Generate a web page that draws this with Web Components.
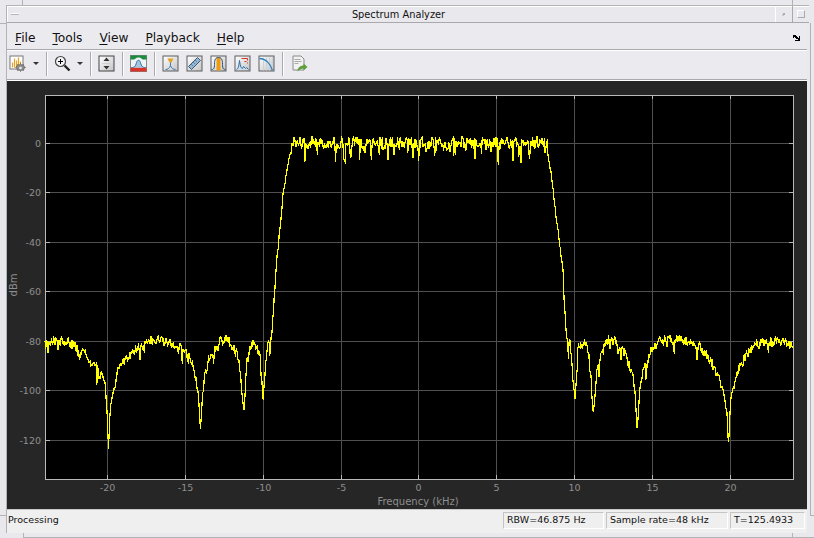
<!DOCTYPE html>
<html>
<head>
<meta charset="utf-8">
<title>Spectrum Analyzer</title>
<style>
html, body { margin: 0; padding: 0; background: #e9e8ec; }
body { font-family: "DejaVu Sans", sans-serif; width: 814px; height: 538px; overflow: hidden; }
</style>
</head>
<body>
<wm-window heading="Spectrum Analyzer">
    <app-menubar>
	<menu-entry key="F" rest="ile"></menu-entry>
	<menu-entry key="T" rest="ools"></menu-entry>
	<menu-entry key="V" rest="iew"></menu-entry>
	<menu-entry key="P" rest="layback"></menu-entry>
	<menu-entry key="H" rest="elp"></menu-entry>
    </app-menubar>
    <app-toolbar></app-toolbar>
    <spectrum-plot></spectrum-plot>
    <app-statusbar>
	<span slot="message">Processing</span>
	<status-cell width="101">RBW=46.875 Hz</status-cell>
	<status-cell width="122">Sample rate=48 kHz</status-cell>
	<status-cell width="75">T=125.4933</status-cell>
    </app-statusbar>
</wm-window>

<script>
// Window manager frame: title bar + client area
class WmWindow extends HTMLElement {
    constructor () {
	super();
	this.attachShadow({ mode: "open" });
	this.shadowRoot.innerHTML = `
<style>
:host { display: block; position: relative; width: 814px; height: 538px; box-sizing: border-box; padding: 5px 5px 5px 6px; }
.frame { display: flex; flex-direction: column; height: 100%; border-top: 1px solid #b3b3b5; border-left: 1px solid #b3b3b5; box-shadow: inset 1px 1px 0 #fff; box-sizing: border-box; }
.title { height: 16px; display: grid; grid-template-columns: 15px 1fr 17px 17px; border-bottom: 1px solid #a9a9ab; flex: none; font-size: 9.8px; color: #111; }
.title > div { display: flex; align-items: center; justify-content: center; }
.btn-min::before { content: ""; width: 8px; height: 1px; background: #b5b5b7; box-shadow: 0 -1px 0 #fff; }
.btn-menu { border-left: 1px solid #fff; }
.btn-menu::before { content: ""; width: 2px; height: 2px; background: #aaa; box-shadow: -1px 1px 0 #ccc; }
.btn-max { border-left: 1px solid #a9a9ab; }
.btn-max::before { content: ""; width: 6px; height: 6px; border: 1px solid #fff; border-right-color: #aaa; border-bottom-color: #aaa; }
.client { flex: 1; display: flex; flex-direction: column; min-height: 0; margin-right: 2px; }
.edge { position: absolute; background: #b3b3b5; }
.e1 { left: 22px; top: 0; width: 1px; height: 5px; }
.e2 { left: 0; top: 23px; width: 7px; height: 1px; }
.e3 { left: 0; top: 515px; width: 6px; height: 1px; }
.e4 { left: 23px; top: 533px; width: 1px; height: 5px; }
.e5 { left: 792px; top: 0; width: 1px; height: 6px; }
.e6 { left: 810px; top: 515px; width: 4px; height: 1px; }
.e7 { left: 23px; top: 537px; width: 791px; height: 1px; }
.e8 { left: 810px; top: 23px; width: 1px; height: 492px; }
.e9 { left: 792px; top: 533px; width: 1px; height: 5px; }
</style>
<div class="frame">
    <div class="title">
	<div class="btn-min"></div>
	<div>${this.getAttribute("heading")}</div>
	<div class="btn-menu"></div>
	<div class="btn-max"></div>
    </div>
    <div class="client"><slot></slot></div>
</div>
<i class="edge e1"></i><i class="edge e2"></i><i class="edge e3"></i><i class="edge e4"></i>
<i class="edge e5"></i><i class="edge e6"></i><i class="edge e7"></i><i class="edge e8"></i><i class="edge e9"></i>
`;
    }
}
customElements.define("wm-window", WmWindow);


class AppMenubar extends HTMLElement {
    constructor () {
	super();
	this.attachShadow({ mode: "open" });
	this.shadowRoot.innerHTML = `
<style>
:host { display: flex; flex: none; align-items: center; gap: 17px; height: 27px; box-sizing: border-box; padding: 3px 0 0 8px; position: relative; background: #ebeaee; border-bottom: 1px solid #a9a9ab; font-size: 12.2px; color: #111; }
svg { position: absolute; right: 6px; top: 12px; }
</style>
<slot></slot>
<svg width="8" height="6" viewBox="0 0 8 6" shape-rendering="crispEdges"><path d="M0 0h3v1h1v1h1v1h1V1h1v5H2V5h3V4H3V3H2V2H1v1H0z" fill="#000"/></svg>
`;
    }
}
customElements.define("app-menubar", AppMenubar);

class MenuEntry extends HTMLElement {
    constructor () {
	super();
	this.attachShadow({ mode: "open" });
	this.shadowRoot.innerHTML = `
<style>
:host { display: inline-block; }
u { text-underline-offset: 2px; }
</style>
<u>${this.getAttribute("key")}</u>${this.getAttribute("rest")}
`;
    }
}
customElements.define("menu-entry", MenuEntry);


// 17x17 toolbar glyphs
const TOOL_FRAME = `<rect x="1.5" y="1.5" width="15" height="15" fill="url(#g)" stroke="#5c5c5c"/>`;
const TOOL_ICONS = {
    "settings": `<rect x="1.5" y="1.5" width="13" height="13" fill="#fff" stroke="#777"/>
	<path d="M4 13V8M6 13V4M8 13V6M10 13V3M12 13V7" stroke="#e8a020" stroke-width="1.2"/>
	<path d="M12 9l1 1.500 2-.500 .5 2 1.500 1-1.500 1-.5 2-2-.500-1 1.500-1-1.500-2 .500-.5-2-1.500-1 1.500-1 .5-2 2 .500z" fill="#8c8c8c" stroke="#555" stroke-width=".6"/><circle cx="12" cy="13.500" r="1.300" fill="#eee"/>`,
    "zoom": `<circle cx="7" cy="7" r="5" fill="#f4f4f4" stroke="#444" stroke-width="1.2"/>
	<path d="M4.500 7h5M7 4.500v5" stroke="#000"/><path d="M11 11l5 5" stroke="#222" stroke-width="2.4"/>`,
    "scale": `<rect x="1.5" y="1.5" width="15" height="15" fill="url(#g)" stroke="#444"/>
	<path d="M9 3l3 3.500H6zM9 15l3-3.500H6z" fill="#333"/><path d="M5 9h8" stroke="#bbb" stroke-dasharray="1 1"/>`,
    "spectrum": `<rect x="1" y="1" width="16" height="16" fill="#eef3f4" stroke="#888"/>
	<path d="M1 5h3c2 0 2-2 5-2s3 2 5 2h3V1H1z" fill="#1d8a3e"/><rect x="1" y="13" width="16" height="4" fill="#d8352a"/>
	<path d="M2 13c3 0 4-1 5-5 1-3 3-3 4 0 1 4 2 5 5 5" fill="#a7c6de" stroke="#2a6fa8"/>`,
    "peak": TOOL_FRAME + `<path d="M6 4h6l-2 4H8z" fill="#e8a020"/><path d="M9 8v3M9 11c-1 3-3 4-5 4M9 11c1 3 3 4 5 4" stroke="#3a78b0" fill="none"/>`,
    "ruler": TOOL_FRAME + `<path d="M3 12L12 3l3 3-9 9z" fill="#8fb7d8" stroke="#44586c"/><path d="M6 10l1 1M8 8l1 1M10 6l1 1" stroke="#44586c"/>`,
    "channel": TOOL_FRAME + `<rect x="7" y="3" width="4" height="13" fill="#f09a10"/><path d="M2 15c2 0 3-1 3-5 0-5 1-7 4-7s4 2 4 7c0 4 1 5 3 5" fill="none" stroke="#23507c"/>`,
    "distortion": TOOL_FRAME + `<path d="M3 15c2-1 2-2 3-9 1 7 2 8 3 8l1-2 2 2 1-1 2 2" fill="#cfe0ee" stroke="#2a6fa8"/><path d="M8 4h6M14 4v2M14 8v1M11 7h2" stroke="#d8352a"/>`,
    "ccdf": TOOL_FRAME + `<path d="M6 3v13M9 3v13M12 3v13M15 3v13" stroke="#c9d2da"/><path d="M2 4c6 0 11 5 13 12" fill="none" stroke="#2a7fc0" stroke-width="1.3"/>`,
    "export": `<path d="M3.500 1.500h8l3 3v11h-11z" fill="#f2f2f2" stroke="#8a8a8a"/>
	<path d="M5 5h6M5 7h7M5 9h4" stroke="#aaa"/><path d="M8 17c0-4 3-6 6-6V9l4 3.500-4 3.500v-2c-2 0-4 1-6 3z" fill="#5c9e3c"/>`,
};

class ToolButton extends HTMLElement {
    constructor () {
	super();
	this.attachShadow({ mode: "open" });
	const icon = TOOL_ICONS[ this.getAttribute("icon") ];
	const drop = this.hasAttribute("drop");
	const size = this.getAttribute("size") || 17;
	this.shadowRoot.innerHTML = `
<style>
:host { display: inline-flex; align-items: center; height: 17px; }
svg { display: block; overflow: visible; }
.drop { width: 0; height: 0; margin-left: 7px; border: 3px solid transparent; border-top: 3px solid #333; border-bottom: 0; }
</style>
<svg width="${size}" height="17" viewBox="0.5 0.5 ${size} 17">
    <defs><linearGradient id="g" x1="0" y1="0" x2="1" y2="1"><stop offset="0" stop-color="#fff"/><stop offset="1" stop-color="#c4c4c6"/></linearGradient></defs>
    ${icon}
</svg>
${drop ? `<span class="drop"></span>` : ""}
`;
    }
}
customElements.define("tool-button", ToolButton);

class AppToolbar extends HTMLElement {
    constructor () {
	super();
	this.attachShadow({ mode: "open" });
	this.shadowRoot.innerHTML = `
<style>
:host { display: flex; flex: none; align-items: center; gap: 7px; height: 30px; box-sizing: border-box; padding: 0 0 2px 2px; background: #ebeaee; border-bottom: 1px solid #a9a9ab; box-shadow: inset 0 1px 0 #fff; }
i { display: block; width: 1px; height: 24px; background: #a9a9ab; box-shadow: 1px 0 0 #fff; }
</style>
<tool-button icon="settings" drop></tool-button><i></i>
<tool-button icon="zoom" size="16" drop></tool-button><i></i>
<tool-button icon="scale"></tool-button><i></i>
<tool-button icon="spectrum"></tool-button><i></i>
<tool-button icon="peak"></tool-button>
<tool-button icon="ruler"></tool-button>
<tool-button icon="channel"></tool-button>
<tool-button icon="distortion"></tool-button>
<tool-button icon="ccdf"></tool-button><i></i>
<tool-button icon="export"></tool-button>
`;
    }
}
customElements.define("app-toolbar", AppToolbar);


// Envelope of the trace, in picture pixels
const ENVELOPE = [
    [45,345],[53,339],[73,344],[83,353],[97,367],[105,383],[107,410],[108.5,448],[110,410],[112,397],[118,370],[127,357],[137,347],
    [157,339],[180,347],[193,363],[198,390],[200.5,430],[203,387],[208,360],[217,343],[225,338],[237,350],[240,372],[244,414],
    [247,360],[253,341],[260,355],[263,400],[266,360],[268,343],[270,345],[272,330],[276,270],[283,195],[288,165],[292,143],
    [420,143],[547,143],[552,180],[556,215],[563,270],[566,330],[568,345],[570,342],[575,400],[578,350],[585,341],[590,363],
    [593,414],[597,373],[602,347],[610,338],[623,350],[632,370],[635,390],[637,430],[640,387],[643,367],[650,353],[658,342],
    [680,339],[700,347],[717,370],[723,390],[727,410],[728.5,448],[730,410],[731,397],[737,373],[747,353],[760,343],[783,341],[794,347],
];

class SpectrumPlot extends HTMLElement {
    constructor () {
	super();
	this.attachShadow({ mode: "open" });
	this.shadowRoot.innerHTML = `
<style>
:host { display: block; flex: 1; min-height: 0; background: #262626; border-top: 1px solid #fff; border-bottom: 1px solid #c8c8c8; }
svg { display: block; font-family: "DejaVu Sans", sans-serif; font-size: 9.5px; fill: #8e8e8e; }
</style>
<svg width="800" height="427" viewBox="7 81 800 427">${this.render()}</svg>
`;
    }

    render () {
	const X = khz => 418.9 + khz * 15.58;
	const Y = db => 143 - db * 2.475;
	let out = `<rect x="45.5" y="95.5" width="748" height="384" fill="#000" stroke="#b9b9b9" stroke-width="1"/>`;

	for ( let khz = -20; khz <= 20; khz += 5 ) {
	    const x = Math.floor( X(khz) ) + 0.5;
	    out += `<path d="M${x} 96v383" stroke="#505050"/><path d="M${x} 96v3M${x} 479v-4" stroke="#b9b9b9"/>`;
	    out += `<text x="${x}" y="491" text-anchor="middle">${khz}</text>`;
	}
	for ( let db = 0; db >= -120; db -= 20 ) {
	    const y = Math.floor( Y(db) ) + 0.5;
	    out += `<path d="M46 ${y}h747" stroke="#505050"/><path d="M46 ${y}h4M793 ${y}h-4" stroke="#b9b9b9"/>`;
	    out += `<text x="41" y="${y + 3.500}" text-anchor="end">${db}</text>`;
	}
	out += `<text x="418" y="505" text-anchor="middle" font-size="10">Frequency (kHz)</text>`;
	out += `<text transform="translate(17 285) rotate(-90)" text-anchor="middle" font-size="10">dBm</text>`;
	out += `<polyline fill="none" stroke="#ffff00" stroke-width="1.2" shape-rendering="crispEdges" points="${this.tracePoints()}"/>`;
	return out;
    }

    tracePoints () {
	let seed = 48271;
	const rand = () => {
	    seed = ( seed * 48271 ) % 2147483647;
	    return seed / 2147483647;
	};
	const envelope = x => {
	    for ( let i = 1; i < ENVELOPE.length; i++ ) {
		const [ x1, y1 ] = ENVELOPE[i];
		const [ x0, y0 ] = ENVELOPE[i - 1];
		if ( x <= x1 )
		    return y0 + (y1 - y0) * (x - x0) / (x1 - x0);
	    }
	    return 347;
	};
	const pts = [];
	for ( let x = 45; x <= 793; x += 0.73 ) {
	    const base = envelope(x);
	    const inSkirt = (x > 274 && x < 292) || (x > 548 && x < 566);
	    let amp = inSkirt ? 0.4 : ( base < 200 ? 1 : 0.8 );
	    // dips stay clean, the noise lives on the flat parts
	    if ( base > 385 )
		amp = 0.2;
	    let noise = ( rand() - 0.5 ) * 13 * amp;
	    if ( rand() < 0.12 )
		noise += rand() * 17 * amp;
	    pts.push( `${x.toFixed(2)},${Math.round( Math.min( base + noise, 451 ) )}` );
	}
	return pts.join(" ");
    }
}
customElements.define("spectrum-plot", SpectrumPlot);


class AppStatusbar extends HTMLElement {
    constructor () {
	super();
	this.attachShadow({ mode: "open" });
	this.shadowRoot.innerHTML = `
<style>
:host { display: flex; flex: none; align-items: center; height: 23px; box-sizing: border-box; padding: 0 2px 2px 1px; gap: 2px; background: #efefef; font-size: 9.5px; color: #111; }
.msg { flex: 1; padding-bottom: 3px; }
</style>
<div class="msg"><slot name="message"></slot></div>
<slot></slot>
`;
    }
}
customElements.define("app-statusbar", AppStatusbar);

class StatusCell extends HTMLElement {
    constructor () {
	super();
	this.attachShadow({ mode: "open" });
	this.shadowRoot.innerHTML = `
<style>
:host { display: block; box-sizing: border-box; height: 17px; line-height: 14px; padding-left: 3px; border: 1px solid #c4c4c4; border-right-color: #fff; border-bottom-color: #fff; width: ${this.getAttribute("width")}px; white-space: nowrap; overflow: hidden; }
</style>
<slot></slot>
`;
    }
}
customElements.define("status-cell", StatusCell);
</script>
</body>
</html>
